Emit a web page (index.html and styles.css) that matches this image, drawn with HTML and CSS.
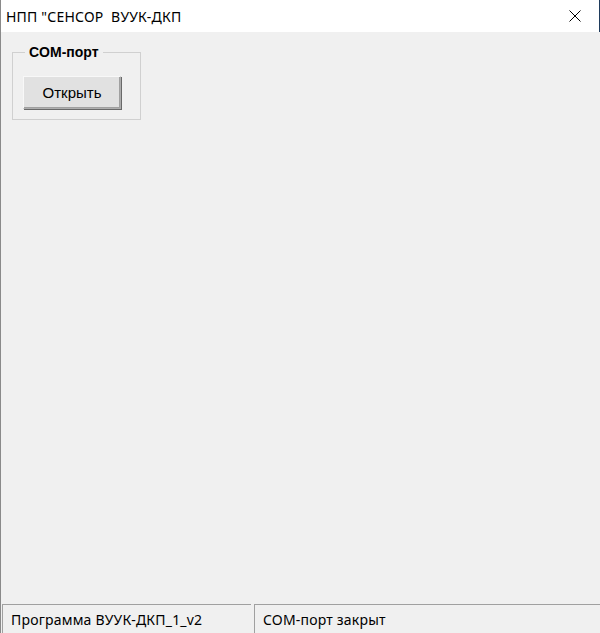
FILE: index.html
```html
<!DOCTYPE html>
<html>
<head>
<meta charset="utf-8">
<link rel="stylesheet" href="styles.css">
</head>
<body>
<div class="window">
  <div class="titlebar">
    <span class="title">НПП "СЕНСОР&nbsp;&nbsp;ВУУК-ДКП</span>
    <span class="close">
      <svg width="12" height="12" viewBox="0 0 12 12"><path d="M0.5 0.5L11.5 11.5M11.5 0.5L0.5 11.5" stroke="#000" stroke-width="1"/></svg>
    </span>
  </div>
  <div class="client">
    <fieldset class="group">
      <legend class="group-label">COM-порт</legend>
      <button class="btn">Открыть</button>
    </fieldset>
  </div>
  <div class="statusbar">
    <div class="panel panel-left">Программа ВУУК-ДКП_1_v2</div>
    <div class="panel panel-right">COM-порт закрыт</div>
  </div>
</div>
</body>
</html>
```
FILE: styles.css
```css
html, body {
  margin: 0;
  padding: 0;
  background: #f0f0f0;
}
.window {
  width: 600px;
  height: 633px;
  box-sizing: border-box;
  border-left: 1px solid #8a8a8a;
  display: flex;
  flex-direction: column;
  background: #f0f0f0;
  font-family: "Noto Sans", "Open Sans", sans-serif;
}
.titlebar {
  height: 32px;
  flex: none;
  background: #fff;
  border-right: 1px solid #1f3b5c;
  display: flex;
  align-items: center;
  justify-content: space-between;
  box-sizing: border-box;
}
.title {
  font-size: 14px;
  color: #000;
  padding-left: 5px;
  letter-spacing: 0.2px;
}
.close {
  width: 46px;
  height: 32px;
  display: flex;
  align-items: center;
  justify-content: center;
  margin-right: 1px;
}
.client {
  flex: 1;
  padding: 12px 0 0 11px;
}
.group {
  margin: 0;
  width: 129px;
  height: 76px;
  box-sizing: border-box;
  border: 1px solid #d0d0d0;
  padding: 0 0 0 10px;
}
.group-label {
  font-family: "Liberation Sans", Arial, sans-serif;
  font-weight: bold;
  font-size: 14px;
  color: #000;
  padding: 0 4px;
  margin-left: 2px;
}
.btn {
  margin-top: 16px;
  width: 98px;
  height: 33px;
  background: #e1e1e1;
  border: 1px solid #adadad;
  border-top-color: #f8f8f8;
  border-left-color: #f8f8f8;
  box-shadow: inset -1px -1px 0 #a0a0a0, 1px 1px 0 #696969;
  font-family: "Liberation Sans", Arial, sans-serif;
  font-size: 15px;
  color: #000;
  padding: 0;
}
.statusbar {
  height: 29px;
  flex: none;
  display: flex;
  gap: 3px;
  padding-left: 1px;
}
.panel {
  box-sizing: border-box;
  height: 29px;
  border-top: 1px solid #a0a0a0;
  border-left: 1px solid #a0a0a0;
  font-size: 14px;
  letter-spacing: 0.2px;
  color: #000;
  display: flex;
  align-items: center;
  padding-left: 8px;
}
.panel-left {
  width: 249px;
}
.panel-right {
  flex: 1;
}
```
